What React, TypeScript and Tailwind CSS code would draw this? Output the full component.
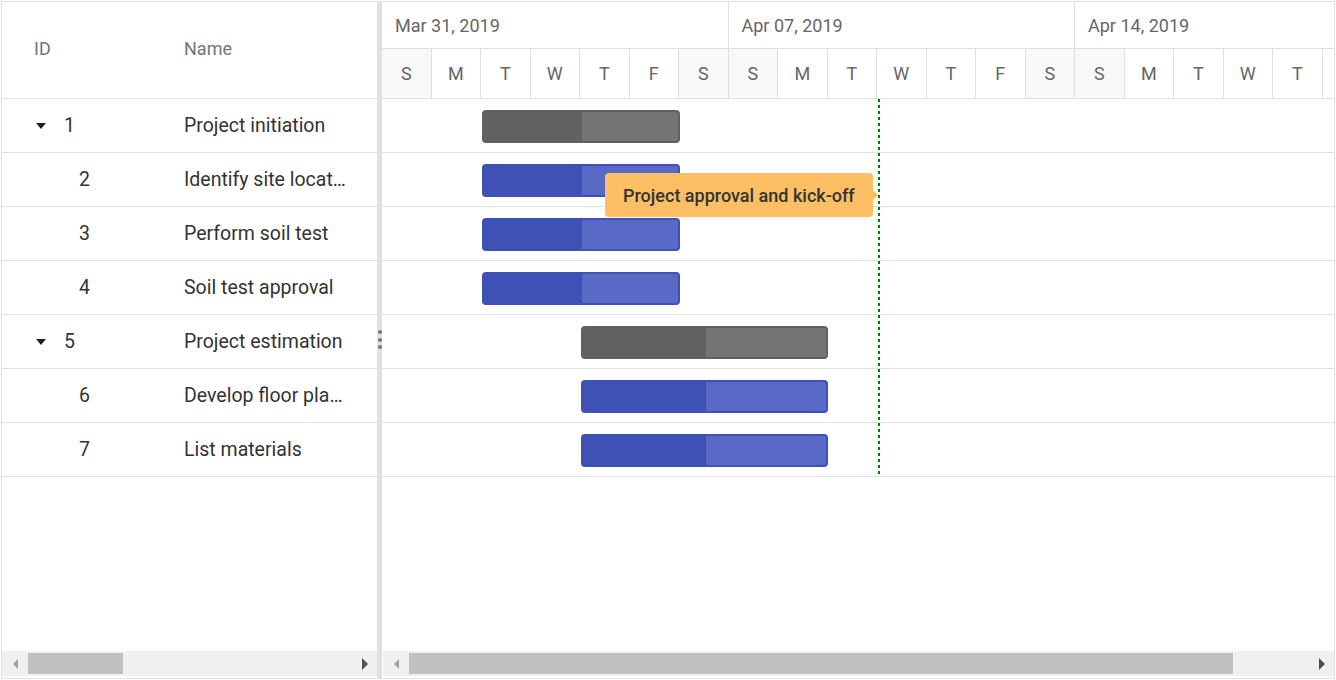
import React from 'react';

type Task = {
    id: number;
    name: string;
    parent?: boolean;
    start: number;
    width: number;
    progress: number;
};

const tasks: Task[] = [
    { id: 1, name: 'Project initiation', parent: true, start: 100, width: 198, progress: 100 },
    { id: 2, name: 'Identify site location', start: 100, width: 198, progress: 100 },
    { id: 3, name: 'Perform soil test', start: 100, width: 198, progress: 100 },
    { id: 4, name: 'Soil test approval', start: 100, width: 198, progress: 100 },
    { id: 5, name: 'Project estimation', parent: true, start: 199, width: 247, progress: 125 },
    { id: 6, name: 'Develop floor plan for estimation', start: 199, width: 247, progress: 125 },
    { id: 7, name: 'List materials', start: 199, width: 247, progress: 125 },
];

const weeks = ['Mar 31, 2019', 'Apr 07, 2019', 'Apr 14, 2019'];
const days = 'SMTWTFSSMTWTFSSMTWTF'.split('');

const ScrollBar: React.FC<{ thumbLeft: number; thumbWidth: number; className?: string }> = ({
    thumbLeft,
    thumbWidth,
    className = '',
}) => (
    <div className={'flex h-[25px] shrink-0 items-center bg-[#f0f0f0] ' + className}>
        <div className="flex w-[26px] shrink-0 items-center justify-center">
            <div className="h-0 w-0 border-y-[5px] border-r-[5px] border-y-transparent border-r-[#a3a3a3]" />
        </div>
        <div className="flex h-full flex-1 items-center">
            <div
                className="h-[21px] bg-[#c1c1c1]"
                style={{ marginLeft: thumbLeft, width: thumbWidth }}
            />
        </div>
        <div className="flex w-[26px] shrink-0 items-center justify-center">
            <div className="ml-[2px] h-0 w-0 border-y-[6px] border-l-[6px] border-y-transparent border-l-[#505050]" />
        </div>
    </div>
);

export default function App() {
    return (
        <div className="h-[680px] w-[1336px] bg-white p-px font-['Roboto',sans-serif]">
            <div className="flex h-full border border-[#e0e0e0]">
                {/* Tree grid */}
                <div className="flex w-[375px] shrink-0 flex-col">
                    <div className="flex h-[97px] shrink-0 items-center border-b border-[#e0e0e0] pb-[3px] text-[18px] text-[#757575]">
                        <div className="w-[170px] pl-[32px]">ID</div>
                        <div className="pl-[12px]">Name</div>
                    </div>
                    {tasks.map((t) => (
                        <div
                            key={t.id}
                            className="flex h-[54px] shrink-0 items-center border-b border-[#e0e0e0] pt-px text-[19.5px] text-[#333]"
                        >
                            {t.parent ? (
                                <div className="flex w-[170px] items-center pl-[34px]">
                                    <div className="h-0 w-0 border-x-[5px] border-t-[6px] border-x-transparent border-t-[#222]" />
                                    <span className="ml-[18px]">{t.id}</span>
                                </div>
                            ) : (
                                <div className="w-[170px] pl-[77px]">{t.id}</div>
                            )}
                            <div className="min-w-0 flex-1 truncate pl-[12px] pr-[28px]">{t.name}</div>
                        </div>
                    ))}
                    <div className="flex-1" />
                    <ScrollBar thumbLeft={0} thumbWidth={95} className="mb-[2px]" />
                </div>

                {/* Splitter */}
                <div className="relative w-[5px] shrink-0 bg-[#e0e0e0]">
                    <div className="absolute left-[0.5px] top-[328px] flex flex-col items-center gap-[3.5px]">
                        <div className="h-[4px] w-[4px] rounded-full bg-[#757575]" />
                        <div className="h-[4px] w-[4px] rounded-full bg-[#757575]" />
                        <div className="h-[4px] w-[4px] rounded-full bg-[#757575]" />
                    </div>
                </div>

                {/* Chart */}
                <div className="flex min-w-0 flex-1 flex-col overflow-hidden">
                    <div className="flex h-[47px] shrink-0 border-b border-[#e0e0e0]">
                        {weeks.map((w) => (
                            <div
                                key={w}
                                className="flex w-[346.5px] shrink-0 items-center border-r border-[#e0e0e0] pl-[13px] text-[18px] text-[#666]"
                            >
                                {w}
                            </div>
                        ))}
                    </div>
                    <div className="flex h-[50px] shrink-0 border-b border-[#e0e0e0]">
                        {days.map((d, i) => (
                            <div
                                key={i}
                                className={
                                    'flex w-[49.5px] shrink-0 items-center justify-center border-r border-[#e0e0e0] text-[18px] text-[#666] ' +
                                    (i % 7 === 0 || i % 7 === 6 ? 'bg-[#f8f8f8]' : 'bg-white')
                                }
                            >
                                {d}
                            </div>
                        ))}
                    </div>
                    <div className="relative flex-1">
                        {tasks.map((t) => (
                            <div key={t.id} className="flex h-[54px] items-center border-b border-[#e0e0e0] pt-px">
                                <div
                                    className={
                                        'flex h-[33px] overflow-hidden rounded-[4px] border-2 ' +
                                        (t.parent
                                            ? 'border-[#616161] bg-[#757575]'
                                            : 'border-[#3f51b5] bg-[#5869c6]')
                                    }
                                    style={{ marginLeft: t.start, width: t.width }}
                                >
                                    <div
                                        className={'h-full ' + (t.parent ? 'bg-[#616161]' : 'bg-[#3f51b5]')}
                                        style={{ width: t.progress - 2 }}
                                    />
                                </div>
                            </div>
                        ))}

                        {/* Event marker */}
                        <div className="absolute left-[496px] top-0 h-[377px] w-[2px] bg-[repeating-linear-gradient(to_bottom,#007d00_0px,#007d00_3px,transparent_3px,transparent_6px)]" />
                        <div className="absolute left-[223px] top-[74px] flex h-[44px] w-[268px] items-center rounded-[4px] bg-[#fcbf64] pl-[18px] text-[18px] font-medium text-[#333]">
                            Project approval and kick-off
                            <div className="absolute right-[-5px] top-[17px] h-0 w-0 border-y-[5px] border-l-[5px] border-y-transparent border-l-[#fcbf64]" />
                        </div>
                    </div>
                    <ScrollBar thumbLeft={0} thumbWidth={824} className="mb-[2px] ml-px" />
                </div>
            </div>
        </div>
    );
}
